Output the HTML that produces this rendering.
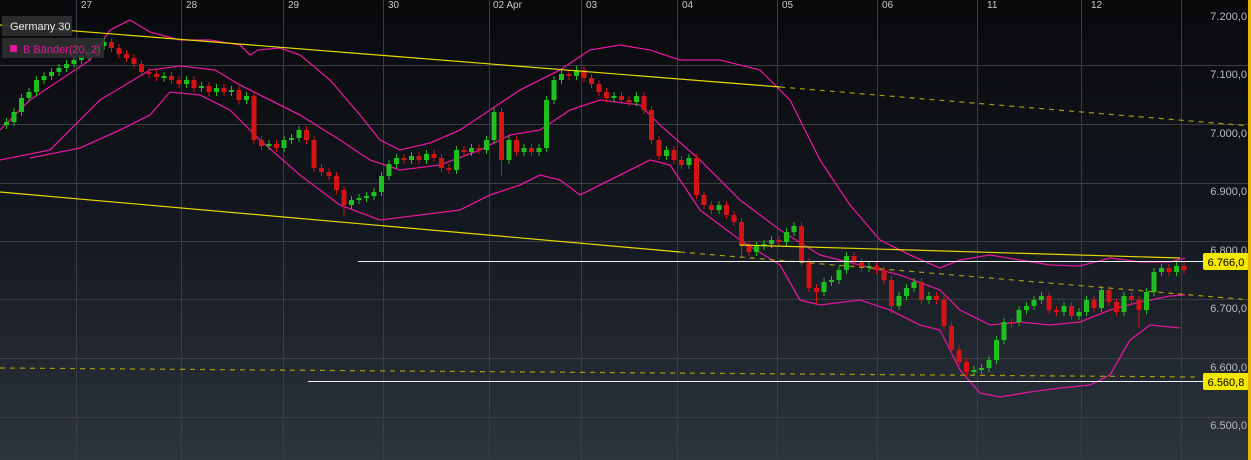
<!DOCTYPE html>
<html><head><meta charset="utf-8"><style>
html,body{margin:0;padding:0;width:1251px;height:460px;overflow:hidden;background:#0b0c0e}
svg{display:block;font-family:"Liberation Sans",sans-serif}
</style></head><body>
<svg width="1251" height="460" xmlns="http://www.w3.org/2000/svg">
<defs><linearGradient id="bg" x1="0" y1="0" x2="0" y2="1">
<stop offset="0" stop-color="#08090b"/><stop offset="0.5" stop-color="#141820"/><stop offset="1" stop-color="#2d343d"/></linearGradient></defs>
<rect width="1251" height="460" fill="url(#bg)"/>
<g stroke="#3a3e44" stroke-width="1">
<line x1="0" y1="65.5" x2="1248" y2="65.5"/><line x1="0" y1="124.5" x2="1248" y2="124.5"/>
<line x1="0" y1="183.5" x2="1248" y2="183.5"/><line x1="0" y1="241.5" x2="1248" y2="241.5"/>
<line x1="0" y1="299.5" x2="1248" y2="299.5"/><line x1="0" y1="358.5" x2="1248" y2="358.5"/>
<line x1="0" y1="417.5" x2="1248" y2="417.5"/>
<line x1="76.5" y1="0" x2="76.5" y2="460"/><line x1="181.5" y1="0" x2="181.5" y2="460"/>
<line x1="283.5" y1="0" x2="283.5" y2="460"/><line x1="383.5" y1="0" x2="383.5" y2="460"/>
<line x1="489.5" y1="0" x2="489.5" y2="460"/><line x1="581.5" y1="0" x2="581.5" y2="460"/>
<line x1="677.5" y1="0" x2="677.5" y2="460"/><line x1="777.5" y1="0" x2="777.5" y2="460"/>
<line x1="877.5" y1="0" x2="877.5" y2="460"/><line x1="977.5" y1="0" x2="977.5" y2="460"/>
<line x1="1081.5" y1="0" x2="1081.5" y2="460"/><line x1="1181.5" y1="0" x2="1181.5" y2="460"/>
</g>
<g fill="#c8c8c8" font-size="10">
<text x="81" y="8">27</text><text x="186" y="8">28</text><text x="288" y="8">29</text><text x="388" y="8">30</text>
<text x="493" y="8">02 Apr</text><text x="586" y="8">03</text><text x="682" y="8">04</text><text x="782" y="8">05</text>
<text x="882" y="8">06</text><text x="987" y="8">11</text><text x="1091" y="8">12</text>
</g>
<g fill="#b8bcc0" font-size="11" text-anchor="end">
<text x="1247" y="20">7.200,0</text><text x="1247" y="78">7.100,0</text><text x="1247" y="137">7.000,0</text>
<text x="1247" y="195">6.900,0</text><text x="1247" y="254">6.800,0</text><text x="1247" y="312">6.700,0</text>
<text x="1247" y="371">6.600,0</text><text x="1247" y="429">6.500,0</text>
</g>
<g fill="none" stroke="#e0189a" stroke-width="1.3">
<polyline points="0,130 30,100 60,80 90,60 110,30 130,20 150,32 180,40 210,40 240,45 250,55 258,50 280,48 300,55 330,80 360,115 380,140 400,150 430,143 460,130 490,110 520,90 560,70 590,50 620,45 650,50 680,60 720,60 760,70 790,100 820,160 850,205 880,240 910,255 940,268 960,260 990,255 1020,260 1050,265 1080,266 1110,258 1140,262 1170,262 1185,258"/>
<polyline points="0,160 50,150 100,100 150,70 180,66 215,70 240,85 270,100 300,115 340,140 370,160 400,170 440,165 480,150 510,135 540,130 570,110 600,100 640,105 660,125 700,160 740,200 780,230 820,255 860,265 900,275 940,290 960,310 990,325 1020,322 1050,325 1080,322 1110,310 1140,302 1170,296 1185,295"/>
<polyline points="30,158 80,148 120,130 150,115 170,92 200,95 230,110 260,140 300,175 340,205 380,220 420,215 460,210 490,195 520,185 540,175 560,180 580,195 600,185 630,170 650,160 670,165 700,210 740,240 780,265 800,300 820,305 860,300 890,310 920,325 940,330 960,370 980,393 1000,397 1030,392 1060,388 1090,385 1110,375 1130,340 1150,325 1180,328"/>
</g>
<path fill="#1fbf1f" d="M4 122h5v3h-5zM6 118h1v11h-1zM11.5 112h5v10h-5zM13.5 108h1v18h-1zM19 98h5v14h-5zM21 94h1v22h-1zM26.5 92h5v6h-5zM28.5 88h1v14h-1zM34 80h5v12h-5zM36 76h1v20h-1zM41.5 76h5v4h-5zM43.5 72h1v12h-1zM49 72h5v4h-5zM51 68h1v12h-1zM56.5 68h5v4h-5zM58.5 64h1v12h-1zM64 64h5v4h-5zM66 60h1v12h-1zM71.5 60h5v4h-5zM73.5 56h1v12h-1zM79 56h5v4h-5zM81 52h1v12h-1zM86.5 52h5v4h-5zM88.5 48h1v12h-1zM94 46h5v6h-5zM96 42h1v14h-1zM101.5 42h5v4h-5zM103.5 38h1v12h-1z
M161.5 76h5v2h-5zM163.5 72h1v10h-1zM184 80h5v4h-5zM186 76h1v12h-1zM199 86h5v2h-5zM201 82h1v10h-1zM214 88h5v4h-5zM216 84h1v12h-1zM229 90h5v2h-5zM231 86h1v10h-1zM244 96h5v4h-5zM246 92h1v12h-1z
M266.5 144h5v2h-5zM268.5 140h1v10h-1zM281.5 140h5v8h-5zM283.5 136h1v16h-1zM289 138h5v2h-5zM291 134h1v10h-1zM296.5 130h5v8h-5zM298.5 126h1v16h-1z
M349 200h5v5h-5zM351 196h1v13h-1zM356.5 198h5v2h-5zM358.5 194h1v10h-1zM364 196h5v2h-5zM366 192h1v10h-1zM371.5 192h5v4h-5zM373.5 188h1v12h-1zM379 176h5v16h-5zM381 172h1v24h-1zM386.5 164h5v12h-5zM388.5 160h1v20h-1zM394 158h5v6h-5zM396 154h1v14h-1zM409 156h5v4h-5zM411 152h1v12h-1zM424 154h5v6h-5zM426 150h1v14h-1z
M454 150h5v20h-5zM456 146h1v28h-1zM469 148h5v4h-5zM471 144h1v12h-1zM484 140h5v10h-5zM486 136h1v18h-1zM491.5 112h5v28h-5zM493.5 108h1v36h-1zM506.5 140h5v20h-5zM508.5 136h1v28h-1zM521.5 148h5v4h-5zM523.5 144h1v12h-1zM536.5 148h5v4h-5zM538.5 144h1v12h-1zM544 100h5v48h-5zM546 96h1v56h-1zM551.5 80h5v20h-5zM553.5 76h1v28h-1zM559 74h5v6h-5zM561 70h1v14h-1zM574 70h5v6h-5zM576 66h1v14h-1z
M611.5 96h5v2h-5zM613.5 92h1v10h-1zM634 96h5v6h-5zM636 92h1v14h-1zM664 150h5v6h-5zM666 146h1v14h-1zM686.5 158h5v7h-5zM688.5 154h1v15h-1zM716.5 205h5v5h-5zM718.5 201h1v13h-1z
M754 246h5v6h-5zM756 242h1v14h-1zM761.5 244h5v2h-5zM763.5 240h1v10h-1zM769 240h5v4h-5zM771 236h1v12h-1zM784 232h5v10h-5zM786 228h1v18h-1zM791.5 226h5v6h-5zM793.5 222h1v14h-1z
M821.5 282h5v10h-5zM823.5 278h1v18h-1zM829 280h5v2h-5zM831 276h1v10h-1zM836.5 270h5v10h-5zM838.5 266h1v18h-1zM844 256h5v14h-5zM846 252h1v22h-1zM866.5 266h5v2h-5zM868.5 262h1v10h-1z
M896.5 296h5v10h-5zM898.5 292h1v18h-1zM904 288h5v8h-5zM906 284h1v16h-1zM911.5 282h5v6h-5zM913.5 278h1v14h-1zM926.5 296h5v4h-5zM928.5 292h1v12h-1z
M971.5 370h5v2h-5zM973.5 366h1v10h-1zM979 368h5v2h-5zM981 364h1v10h-1zM986.5 360h5v8h-5zM988.5 356h1v16h-1zM994 340h5v20h-5zM996 336h1v28h-1zM1001.5 322h5v18h-5zM1003.5 318h1v26h-1zM1016.5 310h5v12h-5zM1018.5 306h1v20h-1zM1024 306h5v4h-5zM1026 302h1v12h-1zM1031.5 300h5v6h-5zM1033.5 296h1v14h-1zM1039 296h5v4h-5zM1041 292h1v12h-1z
M1061.5 306h5v6h-5zM1063.5 302h1v14h-1zM1076.5 312h5v4h-5zM1078.5 308h1v12h-1zM1084 300h5v12h-5zM1086 296h1v20h-1zM1099 290h5v18h-5zM1101 286h1v26h-1zM1121.5 296h5v16h-5zM1123.5 292h1v24h-1zM1144 292h5v18h-5zM1146 288h1v26h-1zM1151.5 272h5v20h-5zM1153.5 268h1v28h-1zM1159 268h5v4h-5zM1161 264h1v12h-1zM1174 266h5v6h-5zM1176 262h1v14h-1z"/>
<path fill="#d41414" d="M109 42h5v6h-5zM111 38h1v14h-1zM116.5 48h5v6h-5zM118.5 44h1v14h-1zM124 54h5v4h-5zM126 50h1v12h-1zM131.5 58h5v6h-5zM133.5 54h1v14h-1zM139 64h5v8h-5zM141 60h1v16h-1zM146.5 72h5v2h-5zM148.5 68h1v10h-1zM154 74h5v3h-5zM156 70h1v11h-1zM169 76h5v4h-5zM171 72h1v12h-1zM176.5 80h5v4h-5zM178.5 76h1v12h-1zM191.5 80h5v8h-5zM193.5 76h1v16h-1zM206.5 86h5v6h-5zM208.5 82h1v14h-1zM221.5 88h5v4h-5zM223.5 84h1v12h-1zM236.5 90h5v10h-5zM238.5 86h1v18h-1z
M251.5 96h5v44h-5zM253.5 92h1v52h-1zM259 140h5v6h-5zM261 136h1v14h-1zM274 144h5v4h-5zM276 140h1v12h-1zM304 130h5v10h-5zM306 126h1v18h-1zM311.5 140h5v28h-5zM313.5 136h1v36h-1zM319 168h5v4h-5zM321 164h1v12h-1zM326.5 172h5v4h-5zM328.5 168h1v12h-1zM334 176h5v14h-5zM336 172h1v22h-1zM341.5 190h5v15h-5zM343.5 186h1v30h-1z
M401.5 158h5v2h-5zM403.5 154h1v10h-1zM416.5 156h5v4h-5zM418.5 152h1v12h-1zM431.5 154h5v4h-5zM433.5 150h1v12h-1zM439 158h5v10h-5zM441 154h1v18h-1zM446.5 168h5v2h-5zM448.5 164h1v10h-1zM461.5 150h5v2h-5zM463.5 146h1v10h-1zM476.5 148h5v2h-5zM478.5 144h1v10h-1zM499 112h5v48h-5zM501 108h1v68h-1zM514 140h5v12h-5zM516 136h1v20h-1zM529 148h5v4h-5zM531 144h1v12h-1z
M566.5 74h5v2h-5zM568.5 70h1v10h-1zM581.5 70h5v8h-5zM583.5 66h1v16h-1zM589 78h5v6h-5zM591 74h1v14h-1zM596.5 84h5v8h-5zM598.5 80h1v16h-1zM604 92h5v6h-5zM606 88h1v14h-1zM619 96h5v4h-5zM621 92h1v12h-1zM626.5 100h5v2h-5zM628.5 96h1v10h-1zM641.5 96h5v14h-5zM643.5 92h1v22h-1zM649 110h5v30h-5zM651 106h1v38h-1zM656.5 140h5v16h-5zM658.5 136h1v24h-1zM671.5 150h5v10h-5zM673.5 146h1v18h-1zM679 160h5v5h-5zM681 156h1v13h-1z
M694 158h5v37h-5zM696 154h1v45h-1zM701.5 195h5v10h-5zM703.5 191h1v18h-1zM709 205h5v5h-5zM711 201h1v13h-1zM724 205h5v10h-5zM726 201h1v18h-1zM731.5 215h5v7h-5zM733.5 211h1v15h-1zM739 222h5v24h-5zM741 218h1v40h-1zM746.5 246h5v6h-5zM748.5 242h1v14h-1zM776.5 240h5v2h-5zM778.5 236h1v10h-1z
M799 226h5v36h-5zM801 222h1v44h-1zM806.5 262h5v26h-5zM808.5 258h1v34h-1zM814 288h5v4h-5zM816 284h1v20h-1zM851.5 256h5v6h-5zM853.5 252h1v14h-1zM859 262h5v6h-5zM861 258h1v14h-1zM874 266h5v4h-5zM876 262h1v12h-1zM881.5 270h5v10h-5zM883.5 266h1v18h-1zM889 280h5v26h-5zM891 276h1v38h-1zM919 282h5v18h-5zM921 278h1v26h-1zM934 296h5v4h-5zM936 292h1v12h-1z
M941.5 300h5v26h-5zM943.5 296h1v34h-1zM949 326h5v24h-5zM951 322h1v32h-1zM956.5 350h5v12h-5zM958.5 346h1v20h-1zM964 362h5v10h-5zM966 358h1v18h-1zM1009 322h5v2h-5zM1011 318h1v10h-1zM1046.5 296h5v14h-5zM1048.5 292h1v22h-1zM1054 310h5v2h-5zM1056 306h1v10h-1zM1069 306h5v10h-5zM1071 302h1v18h-1zM1091.5 300h5v8h-5zM1093.5 296h1v16h-1zM1106.5 290h5v12h-5zM1108.5 286h1v20h-1zM1114 302h5v10h-5zM1116 298h1v18h-1zM1129 296h5v4h-5zM1131 292h1v12h-1zM1136.5 300h5v10h-5zM1138.5 296h1v32h-1zM1166.5 268h5v4h-5zM1168.5 264h1v12h-1zM1181.5 266h5v4h-5zM1183.5 262h1v12h-1z"/>
<g stroke="#e8d800" stroke-width="1.2" fill="none">
<line x1="0" y1="25" x2="780" y2="87"/>
<line x1="780" y1="87" x2="1251" y2="126" stroke-dasharray="5,5" stroke="#a89a10"/>
<line x1="0" y1="192" x2="680" y2="252"/>
<line x1="680" y1="252" x2="1251" y2="300" stroke-dasharray="5,5" stroke="#a89a10"/>
<line x1="740" y1="245" x2="1180" y2="258"/>
<line x1="0" y1="368" x2="1200" y2="377" stroke-dasharray="5,5" stroke="#a89a10"/>
</g>
<line x1="358" y1="261.5" x2="1203" y2="261.5" stroke="#f0f0f0" stroke-width="1"/>
<line x1="308" y1="381.5" x2="1203" y2="381.5" stroke="#f0f0f0" stroke-width="1"/>
<rect x="1203" y="253" width="46" height="17" rx="2" fill="#f5e800"/>
<text x="1226" y="266" text-anchor="middle" font-size="11" fill="#000">6.766,0</text>
<rect x="1203" y="373" width="46" height="17" rx="2" fill="#f5e800"/>
<text x="1226" y="386" text-anchor="middle" font-size="11" fill="#000">6.560,8</text>
<rect x="1248" y="0" width="3" height="460" fill="#e8b400"/>
<rect x="2" y="16" width="70" height="20" fill="#2e2f31" opacity="0.9"/>
<text x="10" y="30" font-size="11" fill="#e8e8e8">Germany 30</text>
<rect x="2" y="38" width="102" height="20" fill="#2e2f31" opacity="0.9"/>
<rect x="10" y="45" width="7" height="7" fill="#e0189a"/>
<text x="23" y="53" font-size="11" fill="#e0189a">B Bänder(20, 2)</text>
</svg>
</body></html>
